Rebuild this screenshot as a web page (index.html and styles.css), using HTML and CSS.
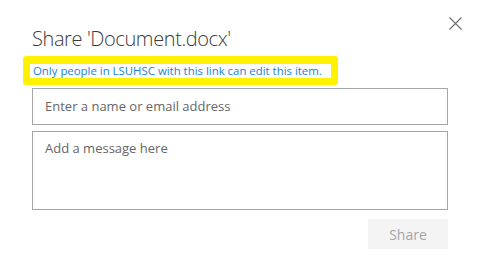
FILE: index.html
```html
<!DOCTYPE html>
<html>
<head>
<meta charset="utf-8">
<link rel="stylesheet" href="styles.css">
</head>
<body>
<div class="dialog">
  <button class="close" aria-label="Close">
    <svg width="13" height="13" viewBox="0 0 13 13"><path d="M0.5 0.5 L12.5 12.5 M12.5 0.5 L0.5 12.5" stroke="#6b6b6b" stroke-width="1.1" fill="none"/></svg>
  </button>
  <h1 class="title">Share 'Document.docx'</h1>
  <div class="notice"><span class="notice-text">Only people in LSUHSC with this link can edit this item.</span></div>
  <div class="field name">Enter a name or email address</div>
  <div class="field message">Add a message here</div>
  <div class="actions"><button class="share">Share</button></div>
</div>
</body>
</html>
```
FILE: styles.css
```css
html, body { margin: 0; padding: 0; background: #fff; }
body { font-family: "Open Sans", "Noto Sans", sans-serif; }
.dialog { position: relative; width: 479px; height: 280px; box-sizing: border-box; padding: 24px 31px 0 32px; display: flex; flex-direction: column; }
.close { position: absolute; left: 449px; top: 17px; width: 13px; height: 13px; padding: 0; border: 0; background: none; display: block; }
.close svg { display: block; }
.title { margin: 0; font-size: 20px; font-weight: 300; line-height: 30px; color: #3a3a3a; letter-spacing: -0.4px; }
.notice { align-self: flex-start; margin: 2px 0 0 -9px; border: 7px solid #fff200; border-top-width: 8px; border-radius: 3px; background: #fff; padding: 0 9px 0 3px; }
.notice-text { display: block; font-size: 11.4px; line-height: 14px; color: #1b82d2; }
.field { box-sizing: border-box; border: 1px solid #a6a6a6; font-size: 13px; color: #666; padding: 0 12px; }
.name { height: 37px; line-height: 35px; margin-top: 3px; }
.message { height: 79px; line-height: 20px; padding-top: 6px; margin-top: 6px; }
.actions { display: flex; justify-content: flex-end; margin-top: 9px; }
.share { width: 80px; height: 30px; border: 0; background: #f4f4f4; color: #a6a6a6; font-family: inherit; font-size: 14px; padding: 0; }
```
